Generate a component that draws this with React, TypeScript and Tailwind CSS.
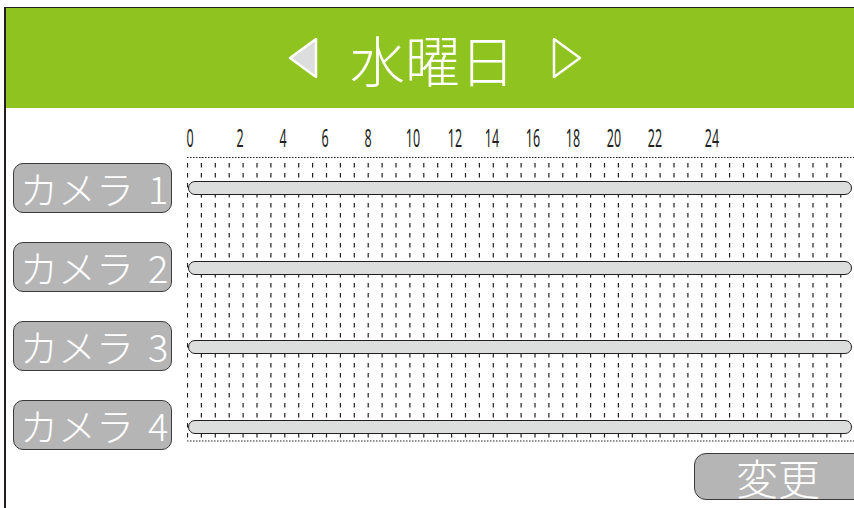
const jp = "font-['Noto_Sans_CJK_JP','Noto_Sans',sans-serif] font-light";

const hours = [
  { label: "0", x: 3 },
  { label: "2", x: 53 },
  { label: "4", x: 96 },
  { label: "6", x: 138 },
  { label: "8", x: 181 },
  { label: "10", x: 226 },
  { label: "12", x: 268 },
  { label: "14", x: 305 },
  { label: "16", x: 346 },
  { label: "18", x: 386 },
  { label: "20", x: 427 },
  { label: "22", x: 468 },
  { label: "24", x: 525 },
];

const cameras = ["1", "2", "3", "4"];

function GridLines() {
  const cols = Array.from({ length: 49 }, (_, i) => 0.5 + i * 13.9);
  return (
    <svg className="pointer-events-none absolute inset-0" width="667" height="285" aria-hidden>
      {cols.map((x) => (
        <line
          key={x}
          x1={x}
          x2={x}
          y1={0}
          y2={285}
          stroke="#231f20"
          strokeWidth="1.2"
          strokeDasharray="4.5 5.5"
          strokeDashoffset="4"
        />
      ))}
      <line x1="0" x2="667" y1="0.5" y2="0.5" stroke="#231f20" strokeWidth="1" strokeDasharray="1.5 1.5" />
      <line x1="0" x2="667" y1="284" y2="284" stroke="#231f20" strokeWidth="1" strokeDasharray="1.5 1.5" />
    </svg>
  );
}

export default function App() {
  return (
    <div className="relative h-[508px] w-[854px] overflow-hidden bg-white">
      <div className="ml-[4px] mt-[7px] flex h-[501px] flex-col border-l-2 border-t border-[#231f20]">
        {/* Header */}
        <div className="flex h-[100px] shrink-0 items-center justify-center bg-[#8fc31f] pl-[10px]">
          <svg width="30" height="42" viewBox="0 0 30 42" aria-hidden>
            <path d="M28 2 L28 40 L2 21 Z" fill="#dcdddd" stroke="#fff" strokeWidth="2.5" strokeLinejoin="round" />
          </svg>
          <span className={`${jp} ml-[32px] mr-[37px] text-[55px] leading-none text-white`}>水曜日</span>
          <svg width="30" height="42" viewBox="0 0 30 42" aria-hidden>
            <path d="M2 2 L2 40 L28 21 Z" fill="none" stroke="#fff" strokeWidth="2.5" strokeLinejoin="round" />
          </svg>
        </div>

        {/* Body */}
        <div className="flex">
          <div className="flex w-[181px] shrink-0 flex-col gap-[29px] pt-[55px]">
            {cameras.map((n) => (
              <div
                key={n}
                className={`${jp} ml-[7px] flex h-[50px] w-[159px] items-center rounded-[10px] border border-[#3e3a39] bg-[#b5b5b6] pl-[6px] text-[38px] leading-none text-white`}
              >
                カメラ<span className="ml-[14px]">{n}</span>
              </div>
            ))}
          </div>

          <div className="flex w-[667px] flex-col">
            <div className="relative h-[49px]">
              {hours.map((h) => (
                <span
                  key={h.label}
                  className="absolute top-[17px] w-[30px] -translate-x-1/2 scale-x-[0.5] text-center font-['Noto_Sans',sans-serif] text-[25px] leading-none text-[#231f20]"
                  style={{ left: h.x }}
                >
                  {h.label}
                </span>
              ))}
            </div>

            <div className="relative flex h-[285px] flex-col gap-[65.5px] pt-[24px]">
              <GridLines />
              {cameras.map((n) => (
                <div
                  key={n}
                  className="relative ml-[1px] h-[14px] w-[664px] rounded-full border-[1.5px] border-[#231f20] bg-[#dcdddd]"
                />
              ))}
            </div>

            <div className="mr-[-12px] mt-[11px] flex justify-end">
              <div
                className={`${jp} flex h-[47px] w-[172px] items-center rounded-[12px] border border-[#3e3a39] bg-[#b5b5b6] pl-[41px] text-[42px] leading-none text-white`}
              >
                変更
              </div>
            </div>
          </div>
        </div>
      </div>
    </div>
  );
}
